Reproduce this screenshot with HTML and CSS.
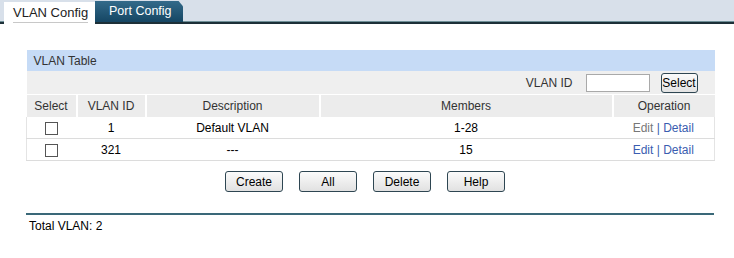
FILE: index.html
```html
<!DOCTYPE html>
<html lang="en">
  <head>
    <meta charset="UTF-8" />
    <title>VLAN Config</title>
    <link rel="stylesheet" href="styles.css">
  </head>
  <body>
    <div class="tab-bar">
      <div class="tab active"><span>VLAN Config</span></div>
      <div class="tab dark">Port Config</div>
    </div>

    <div class="content">
      <table class="vlan-table">
        <colgroup>
          <col style="width: 50px" />
          <col style="width: 69px" />
          <col style="width: 174px" />
          <col style="width: 293px" />
          <col style="width: 102px" />
        </colgroup>
        <tr class="title-row">
          <td colspan="5">VLAN Table</td>
        </tr>
        <tr class="search-row">
          <td colspan="5">
            <div class="search">
              <span class="search-label">VLAN ID</span>
              <input type="text" class="search-input" />
              <button class="select-button">Select</button>
            </div>
          </td>
        </tr>
        <tr class="head-row">
          <th>Select</th>
          <th>VLAN ID</th>
          <th>Description</th>
          <th>Members</th>
          <th>Operation</th>
        </tr>
        <tr class="data-row">
          <td><span class="check"></span></td>
          <td>1</td>
          <td>Default VLAN</td>
          <td>1-28</td>
          <td class="ops"><span class="disabled">Edit</span> | Detail</td>
        </tr>
        <tr class="data-row">
          <td><span class="check"></span></td>
          <td>321</td>
          <td>---</td>
          <td>15</td>
          <td class="ops">Edit | Detail</td>
        </tr>
      </table>

      <div class="buttons">
        <button class="btn">Create</button>
        <button class="btn">All</button>
        <button class="btn">Delete</button>
        <button class="btn">Help</button>
      </div>

      <div class="divider"></div>
      <div class="total">Total VLAN: 2</div>
    </div>
  </body>
</html>
```

FILE: styles.css
```css
body {
  margin: 0;
  font-family: "Liberation Sans", Arial, sans-serif;
  font-size: 12px;
  color: #000;
  background: #fff;
}

.tab-bar {
  display: flex;
  align-items: flex-end;
  height: 22px;
  padding-left: 4px;
  background-color: #d8e0ea;
  border-bottom: 2px solid #1d3038;
  box-shadow: inset 0 -1px 0 #6f9098;
}

.tab {
  height: 20px;
  line-height: 20px;
  font-size: 13px;
}

.tab.active {
  width: 91px;
  background-color: #fff;
  color: #222;
  padding-left: 9px;
  box-sizing: border-box;
  height: 22px;
  margin-bottom: -2px;
  position: relative;
  z-index: 1;
}

.tab.active span {
  display: inline-block;
  line-height: 18px;
  border-bottom: 1px solid #c8c8c8;
  margin-top: 2px;
}

.tab.dark {
  width: 88px;
  padding-left: 14px;
  box-sizing: border-box;
  color: #fff;
  font-size: 12.5px;
  background: linear-gradient(#336a8a, #154663);
  clip-path: polygon(0 0, 95% 0, 100% 25%, 100% 100%, 0 100%);
  height: 21px;
  line-height: 21px;
}

.content {
  margin: 26px 20px 0 26px;
  width: 688px;
}

.vlan-table {
  width: 688px;
  border-collapse: collapse;
  table-layout: fixed;
}

.vlan-table td,
.vlan-table th {
  padding: 0;
  text-align: center;
  font-weight: normal;
}

.title-row td {
  height: 21px;
  background-color: #c6dbf6;
  color: #333;
  text-align: left;
  padding-left: 7px;
  font-size: 12px;
}

.search-row td {
  height: 23px;
  background-color: #efefef;
  border-bottom: 1px solid #fff;
}

.search {
  display: flex;
  justify-content: flex-end;
  align-items: center;
  padding-right: 17px;
}

.search-label {
  color: #333;
  margin-right: 13px;
}

.search-input {
  width: 64px;
  height: 18px;
  box-sizing: border-box;
  border: 1px solid #a9a9a9;
  margin: 0 11px 0 0;
  padding: 0;
}

.select-button {
  width: 37px;
  height: 20px;
  padding: 0;
  font-family: inherit;
  font-size: 12px;
  border: 1px solid #2e4652;
  border-radius: 3px;
  background: linear-gradient(#fbfbfb, #e3e3e3);
}

.head-row th {
  height: 22px;
  background-color: #ececec;
  color: #333;
  border-left: 2px solid #fff;
}

.head-row th:first-child {
  border-left: none;
}

.data-row td {
  height: 21px;
  border-bottom: 1px solid #dcdcdc;
  background-color: #fff;
}

.data-row td:first-child {
  border-left: 1px solid #e4e4e4;
}

.data-row td:last-child {
  border-right: 1px solid #e4e4e4;
}

.check {
  display: inline-block;
  width: 11px;
  height: 11px;
  border: 1px solid #555;
  vertical-align: middle;
}

.ops {
  color: #3a5db0;
}

.ops .disabled {
  color: #777;
}

.buttons {
  display: flex;
  justify-content: center;
  gap: 16px;
  margin-top: 10px;
  padding-right: 10px;
}

.btn {
  width: 58px;
  height: 21px;
  font-family: inherit;
  font-size: 12px;
  color: #000;
  border: 1px solid #2e4652;
  border-radius: 3px;
  background: linear-gradient(#fbfbfb, #e1e1e1);
  padding: 0;
}

.divider {
  margin-top: 21px;
  height: 2px;
  background-color: #3a6878;
}

.total {
  margin-top: 4px;
  padding-left: 3px;
  font-size: 12px;
}
```
